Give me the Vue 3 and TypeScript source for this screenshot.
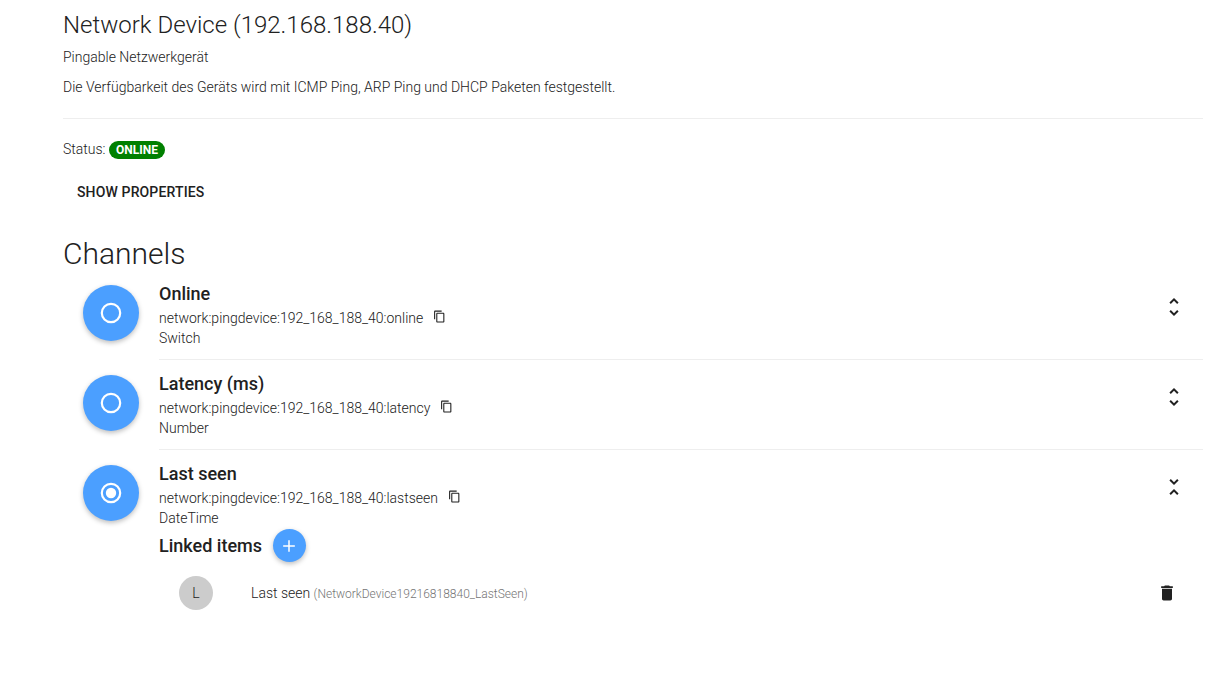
<script setup lang="ts">
import { ref } from 'vue'

interface LinkedItem {
  label: string
  name: string
}

interface Channel {
  label: string
  uid: string
  type: string
  expanded: boolean
  items: LinkedItem[]
}

const channels = ref<Channel[]>([
  { label: 'Online', uid: 'network:pingdevice:192_168_188_40:online', type: 'Switch', expanded: false, items: [] },
  { label: 'Latency (ms)', uid: 'network:pingdevice:192_168_188_40:latency', type: 'Number', expanded: false, items: [] },
  {
    label: 'Last seen',
    uid: 'network:pingdevice:192_168_188_40:lastseen',
    type: 'DateTime',
    expanded: true,
    items: [{ label: 'Last seen', name: 'NetworkDevice19216818840_LastSeen' }],
  },
])

const unfoldMore =
  'M12 5.83L15.17 9l1.41-1.41L12 3 7.41 7.59 8.83 9 12 5.83zm0 12.34L8.83 15l-1.41 1.41L12 21l4.59-4.59L15.17 15 12 18.17z'
const unfoldLess =
  'M7.41 18.59L8.83 20 12 16.83 15.17 20l1.41-1.41L12 14l-4.59 4.59zm9.18-13.18L15.17 4 12 7.17 8.83 4 7.41 5.41 12 10l4.59-4.59z'
</script>

<template>
  <main class="page">
    <header class="thing">
      <h1>Network Device (192.168.188.40)</h1>
      <p>Pingable Netzwerkgerät</p>
      <p>Die Verfügbarkeit des Geräts wird mit ICMP Ping, ARP Ping und DHCP Paketen festgestellt.</p>
    </header>

    <div class="status">Status: <span class="badge">ONLINE</span></div>
    <button type="button" class="flat">Show properties</button>

    <h2>Channels</h2>
    <ul class="channels">
      <li v-for="channel in channels" :key="channel.uid" class="channel">
        <button type="button" class="fab" :aria-label="'Link ' + channel.label">
          <svg viewBox="0 0 24 24" width="24" height="24" aria-hidden="true">
            <circle cx="12" cy="12" r="9.2" fill="none" stroke="currentColor" stroke-width="2.2" />
            <circle v-if="channel.items.length" cx="12" cy="12" r="5.2" fill="currentColor" />
          </svg>
        </button>
        <div class="body">
          <div class="row">
            <div class="text">
              <h3>{{ channel.label }}</h3>
              <div class="line">
                <span>{{ channel.uid }}</span>
                <button type="button" class="copy" aria-label="Copy channel UID">
                  <svg viewBox="0 0 24 24" width="13" height="13" fill="currentColor" aria-hidden="true">
                    <path d="M16 1H4c-1.1 0-2 .9-2 2v14h2V3h12V1zm3 4H8c-1.1 0-2 .9-2 2v14c0 1.1.9 2 2 2h11c1.1 0 2-.9 2-2V7c0-1.1-.9-2-2-2zm0 16H8V7h11v14z" />
                  </svg>
                </button>
              </div>
              <div class="line">{{ channel.type }}</div>
            </div>
            <button
              type="button"
              class="icon"
              :aria-expanded="channel.expanded"
              :aria-label="'Linked items of ' + channel.label"
              @click="channel.expanded = !channel.expanded"
            >
              <svg viewBox="0 0 24 24" width="24" height="24" fill="currentColor" aria-hidden="true">
                <path :d="channel.expanded ? unfoldLess : unfoldMore" />
              </svg>
            </button>
          </div>
          <section v-if="channel.expanded" class="linked">
            <div class="linked-head">
              <h3>Linked items</h3>
              <button type="button" class="fab small" aria-label="Add linked item">
                <svg viewBox="0 0 24 24" width="20" height="20" aria-hidden="true">
                  <path d="M12 5v14M5 12h14" stroke="currentColor" stroke-width="1.8" />
                </svg>
              </button>
            </div>
            <div v-for="item in channel.items" :key="item.name" class="item">
              <span class="avatar">{{ item.label.charAt(0) }}</span>
              <span class="item-label">{{ item.label }} <small>({{ item.name }})</small></span>
              <button type="button" class="icon trash" aria-label="Remove link">
                <svg viewBox="0 0 24 24" width="20" height="20" fill="currentColor" aria-hidden="true">
                  <path d="M6 19c0 1.1.9 2 2 2h8c1.1 0 2-.9 2-2V7H6v12zM19 4h-3.5l-1-1h-5l-1 1H5v2h14V4z" />
                </svg>
              </button>
            </div>
          </section>
        </div>
      </li>
    </ul>
  </main>
</template>

<style>
body {
  background: #fff;
}
</style>

<style scoped>
* {
  box-sizing: border-box;
}
.page {
  padding: 9px 25px 48px 63px;
  color: #212121;
  font-family: Roboto, sans-serif;
  font-size: 14px;
  font-weight: 300;
  line-height: 20px;
}
h1, h2, h3, p, ul {
  margin: 0;
  padding: 0;
}
button {
  display: inline-flex;
  align-items: center;
  justify-content: center;
  padding: 0;
  border: 0;
  background: none;
  color: inherit;
  font: inherit;
  cursor: pointer;
}
.thing {
  padding-bottom: 21px;
  border-bottom: 1px solid #eee;
}
h1 {
  font-size: 24px;
  font-weight: 300;
  line-height: 32px;
}
p {
  margin-top: 10px;
}
h1 + p {
  margin-top: 6px;
}
.status {
  margin-top: 20px;
}
.badge {
  display: inline-block;
  padding: 0 7px;
  border-radius: 9px;
  background: #008000;
  color: #fff;
  font-size: 12px;
  font-weight: 700;
  line-height: 18px;
}
.flat {
  margin-top: 15px;
  padding: 0 14px;
  font-weight: 500;
  line-height: 36px;
  letter-spacing: 0.01em;
  text-transform: uppercase;
}
h2 {
  margin-top: 24px;
  font-size: 30px;
  font-weight: 300;
  line-height: 40px;
}
ul {
  list-style: none;
}
.channel {
  display: flex;
  padding-left: 20px;
}
.channel + .channel {
  margin-top: 4px;
}
.fab {
  flex: none;
  width: 56px;
  height: 56px;
  margin: 11px 20px 0 0;
  border-radius: 50%;
  background: #4b9fff;
  color: #fff;
  box-shadow: 0 2px 5px rgba(0, 0, 0, 0.26);
}
.body {
  flex: 1;
  min-width: 0;
}
.channel:not(:last-child) .body {
  border-bottom: 1px solid #eee;
}
.row {
  display: flex;
  justify-content: space-between;
  padding: 8px 17px 11px 0;
}
h3 {
  font-size: 18px;
  font-weight: 500;
  line-height: 24px;
}
.text h3 {
  margin-bottom: 2px;
}
.line {
  display: flex;
  align-items: center;
  height: 20px;
}
.copy {
  margin: 0 0 4px 10px;
}
.icon {
  align-self: flex-start;
  margin-top: 13px;
}
.linked {
  margin-top: -10px;
}
.linked-head {
  display: flex;
  align-items: center;
}
.fab.small {
  width: 33px;
  height: 33px;
  margin: 0 0 0 11px;
}
.item {
  display: flex;
  align-items: center;
  height: 62px;
  padding: 0 26px 0 20px;
}
.avatar {
  width: 34px;
  margin-right: 38px;
  border-radius: 50%;
  background: #ccc;
  line-height: 34px;
  text-align: center;
}
.item-label {
  flex: 1;
}
small {
  color: #757575;
  font-size: 12px;
}
.trash {
  align-self: center;
  margin-top: 0;
}
</style>
